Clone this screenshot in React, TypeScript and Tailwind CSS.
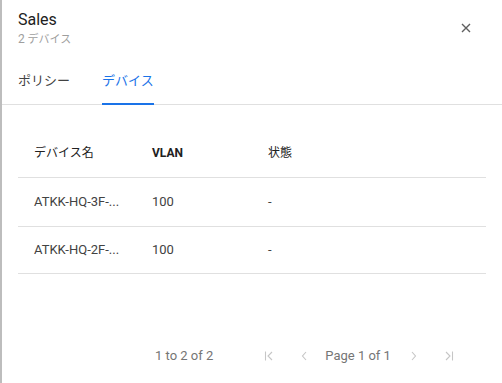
import React from 'react';

const rows = [
  { name: 'ATKK-HQ-3F-...', vlan: '100', status: '-', h: 'h-[49px]' },
  { name: 'ATKK-HQ-2F-...', vlan: '100', status: '-', h: 'h-[47px]' },
];

function PageIcon({ kind }: { kind: 'first' | 'prev' | 'next' | 'last' }) {
  return (
    <svg width="16" height="16" viewBox="0 0 16 16" fill="none" stroke="#c6c6c6" strokeWidth="1.1">
      {kind === 'first' && (
        <>
          <path d="M4.5 3.5v9" />
          <path d="M11 4 7 8l4 4" />
        </>
      )}
      {kind === 'prev' && <path d="M10 4 6.5 8l3.5 4" />}
      {kind === 'next' && <path d="M6 4l3.5 4L6 12" />}
      {kind === 'last' && (
        <>
          <path d="M5 4l4 4-4 4" />
          <path d="M11.5 3.5v9" />
        </>
      )}
    </svg>
  );
}

export default function App() {
  return (
    <div
      className="w-[502px] h-[383px] bg-white border-l-2 border-[#bdbdbd] flex flex-col overflow-hidden"
      style={{ fontFamily: 'Roboto, "Noto Sans CJK JP", sans-serif' }}
    >
      {/* header */}
      <div className="flex items-start justify-between pl-4 pr-[30px] pt-[10px]">
        <div>
          <div className="text-[16px] leading-[20px] text-[#212121]">Sales</div>
          <div className="text-[11px] leading-[16px] mt-[1px] text-[#9e9e9e]">
            <span className="text-[12px]">2</span> デバイス
          </div>
        </div>
        <button className="mt-[12px] w-[12px] h-[12px] flex items-center justify-center">
          <svg width="10" height="10" viewBox="0 0 10 10" stroke="#5f5f5f" strokeWidth="1.4">
            <path d="M1 1l8 8M9 1 1 9" />
          </svg>
        </button>
      </div>

      {/* tabs */}
      <div className="flex pl-4 mt-[23px] border-b border-[#e0e0e0] h-[34px]">
        <div className="text-[13px] leading-[20px] text-[#424242] mr-[32px]">ポリシー</div>
        <div className="text-[13px] leading-[20px] text-[#1a73e8] border-b-2 border-[#1a73e8] h-[34px] -mb-px">
          デバイス
        </div>
      </div>

      {/* table */}
      <div className="mx-4 mt-[24px] w-[468px]">
        <div className="flex h-[49px] items-center border-b border-[#e0e0e0] text-[12px] text-[#212121]">
          <div className="w-[118px] pl-4">デバイス名</div>
          <div className="w-[116px] pl-4 font-bold">VLAN</div>
          <div className="flex-1 pl-4">状態</div>
        </div>
        {rows.map((r, i) => (
          <div
            key={i}
            className={`flex ${r.h} items-center border-b border-[#e0e0e0] text-[13px] text-[#424242]`}
          >
            <div className="w-[118px] pl-4">{r.name}</div>
            <div className="w-[116px] pl-4">{r.vlan}</div>
            <div className="flex-1 pl-4">{r.status}</div>
          </div>
        ))}
      </div>

      {/* pagination */}
      <div className="mt-auto mb-[17px] flex items-center h-[20px] text-[13px] text-[#757575] pl-[153px]">
        <span>1 to 2 of 2</span>
        <div className="ml-[48px] flex items-center">
          <PageIcon kind="first" />
          <div className="ml-[19px]">
            <PageIcon kind="prev" />
          </div>
          <span className="ml-[13px]">Page 1 of 1</span>
          <div className="ml-[15px]">
            <PageIcon kind="next" />
          </div>
          <div className="ml-[19px]">
            <PageIcon kind="last" />
          </div>
        </div>
      </div>
    </div>
  );
}
